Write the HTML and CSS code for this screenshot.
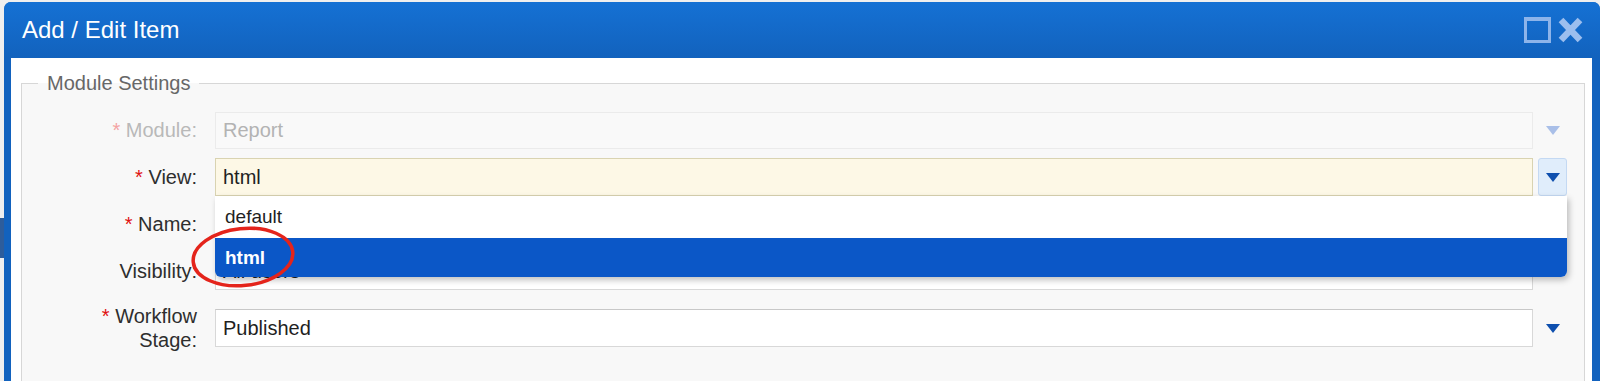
FILE: index.html
```html
<!DOCTYPE html>
<html lang="en">

<head>
  <meta charset="UTF-8">
  <meta name="viewport" content="width=device-width, initial-scale=1.0">
  <title>Add / Edit Item</title>
  <link rel="stylesheet" href="styles.css">
</head>

<body>
  <div class="page">
    <div class="behind">
      <div class="behind-tab"></div>
    </div>

    <div class="window">
      <div class="window-header">
        <span class="window-title">Add / Edit Item</span>
        <div class="window-tools">
          <span class="tool-max"></span>
          <svg class="tool-close" width="25" height="26" viewBox="0 0 25 26">
            <path d="M3 3 L22 23 M22 3 L3 23" />
          </svg>
        </div>
      </div>

      <div class="window-body">
        <fieldset class="settings">
          <legend>Module Settings</legend>

          <div class="form-row is-disabled">
            <label class="field-label"><span class="req">*</span> Module:</label>
            <div class="field">
              <div class="field-input">Report</div>
              <div class="trigger"><span class="arrow"></span></div>
            </div>
          </div>

          <div class="form-row">
            <label class="field-label"><span class="req">*</span> View:</label>
            <div class="field">
              <div class="field-input is-focused">html</div>
              <div class="trigger is-active"><span class="arrow"></span></div>

              <!-- open combo list -->
              <ul class="combo-list">
                <li>default</li>
                <li class="selected">html</li>
              </ul>

              <!-- annotation circle -->
              <svg class="mark" width="112" height="70" viewBox="0 0 112 70">
                <ellipse cx="55" cy="35" rx="50" ry="28.5" transform="rotate(-6 55 35)" />
              </svg>
            </div>
          </div>

          <div class="form-row">
            <label class="field-label"><span class="req">*</span> Name:</label>
            <div class="field">
              <div class="field-input"></div>
              <div class="trigger"></div>
            </div>
          </div>

          <div class="form-row">
            <label class="field-label">Visibility:</label>
            <div class="field">
              <div class="field-input">All users</div>
              <div class="trigger"></div>
            </div>
          </div>

          <div class="form-row row-tall">
            <label class="field-label label-two-lines"><span class="req">*</span> Workflow<br>Stage:</label>
            <div class="field">
              <div class="field-input">Published</div>
              <div class="trigger"><span class="arrow"></span></div>
            </div>
          </div>
        </fieldset>
      </div>
    </div>
  </div>
</body>

</html>
```

FILE: styles.css
```css
body {
  margin: 0;
  background-color: #efefef;
  font-family: "Liberation Sans", Arial, sans-serif;
  overflow: hidden;
}

.page {
  display: flex;
  padding-top: 2px;
  height: 379px;
  overflow: hidden;
}

/* the page behind the dialog, only a sliver shows */
.behind {
  width: 4px;
  padding-top: 216px;
  overflow: hidden;
}

.behind-tab {
  height: 40px;
  background-color: #2d5d9c;
}

.window {
  flex: 1;
  min-width: 0;
  display: flex;
  flex-direction: column;
  background-color: #1262be;
  border-radius: 7px 7px 0 0;
}

.window-header {
  height: 56px;
  flex-shrink: 0;
  display: flex;
  align-items: center;
  justify-content: space-between;
  padding: 0 17px 0 18px;
  border-radius: 7px 7px 0 0;
  background: linear-gradient(#1571d4, #1262bd);
}

.window-title {
  color: white;
  font-size: 24px;
  line-height: 28px;
}

.window-tools {
  display: flex;
  align-items: center;
  gap: 7px;
}

.tool-max {
  display: block;
  width: 27px;
  height: 26px;
  box-sizing: border-box;
  border: 3px solid #8db4ea;
  border-top-width: 4px;
}

.tool-close path {
  stroke: #9cbeee;
  stroke-width: 6.5;
  fill: none;
}

.window-body {
  flex: 1;
  margin: 0 8px 0 7px;
  padding: 14px 7px 0 10px;
  background-color: white;
}

.settings {
  margin: 0;
  padding: 17px 17px 32px 0;
  border: 1px solid #d7d7d7;
  background-color: #f8f8f8;
}

.settings legend {
  margin-left: 16px;
  padding: 0 9px;
  font-size: 20px;
  line-height: 23px;
  color: #676767;
}

.form-row {
  display: grid;
  grid-template-columns: 175px 1fr;
  column-gap: 18px;
  align-items: center;
  margin-bottom: 9px;
}

.form-row.row-tall {
  margin-top: 14px;
}

.field-label {
  text-align: right;
  font-size: 20px;
  line-height: 21px;
  color: #2e2e2e;
}

.field-label.label-two-lines {
  line-height: 24px;
}

.req {
  color: #e01010;
}

.field {
  display: flex;
  position: relative;
}

.field-input {
  flex: 1;
  height: 38px;
  box-sizing: border-box;
  display: flex;
  align-items: center;
  padding: 0 7px;
  border: 1px solid #d8d8d8;
  border-top-color: #c8c8c8;
  background-color: white;
  font-size: 20px;
  color: #1f1f1f;
}

.field-input.is-focused {
  background-color: #fdf8e6;
  border-color: #d9d3b1;
}

.trigger {
  width: 29px;
  margin-left: 5px;
  box-sizing: border-box;
  display: flex;
  align-items: center;
  justify-content: center;
  border: 1px solid transparent;
  border-radius: 3px;
}

.trigger.is-active {
  background-color: #e0edfb;
  border-color: #c4d9f3;
}

.arrow {
  width: 0;
  height: 0;
  border-left: 7px solid transparent;
  border-right: 7px solid transparent;
  border-top: 9px solid #0e4fae;
}

.is-disabled .field-label {
  color: #b9b9b9;
}

.is-disabled .req {
  color: #f4a3a3;
}

.is-disabled .field-input {
  height: 37px;
  background-color: #f9f9f9;
  border-color: #ebebeb;
  color: #b3b3b3;
}

.is-disabled .arrow {
  border-top-color: #a9bfe8;
}

.combo-list {
  position: absolute;
  top: 100%;
  left: 0;
  right: 0;
  z-index: 5;
  margin: 0;
  padding: 0;
  list-style: none;
  background-color: white;
  border-radius: 0 0 6px 6px;
  box-shadow: 2px 3px 6px rgba(0, 0, 0, 0.25);
  overflow: hidden;
}

.combo-list li {
  height: 42px;
  padding-left: 10px;
  display: flex;
  align-items: center;
  font-size: 19px;
  color: #1f1f1f;
}

.combo-list li.selected {
  height: 39px;
  background-color: #0b57c7;
  color: white;
  font-weight: bold;
}

.mark {
  position: absolute;
  left: -27px;
  top: 64px;
  z-index: 6;
}

.mark ellipse {
  fill: none;
  stroke: #e4241b;
  stroke-width: 3.5;
}
```
